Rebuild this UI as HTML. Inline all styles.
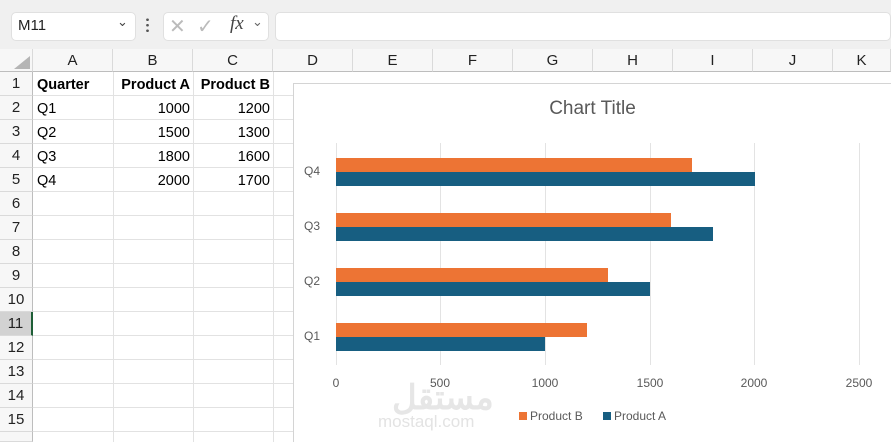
<!DOCTYPE html><html style="width:891px;height:442px;overflow:hidden"><head><style>
*{margin:0;padding:0;box-sizing:border-box}
body{width:891px;height:442px;overflow:hidden;background:#fff;font-family:"Liberation Sans",sans-serif;position:relative}
.a{position:absolute}
.tb{left:0;top:0;width:891px;height:49px;background:#f0f0f0}
.box{background:#fff;border:1px solid #e0e0e0;border-radius:5px}
.ch{top:49px;height:23px;background:#f7f7f7;border-right:1px solid #dadada;border-bottom:1px solid #bdbdbd;text-align:center;font-size:15px;line-height:23px;color:#222}
.rh{left:0;width:33px;height:24px;background:#f7f7f7;border-bottom:1px solid #dadada;border-right:1px solid #bdbdbd;text-align:center;font-size:15px;line-height:24px;color:#222}
.vl{top:72px;width:1px;height:370px;background:#e2e2e2}
.hl{left:33px;width:260px;height:1px;background:#e2e2e2}
.c{font-size:14.5px;line-height:24px;color:#000}
.gl{top:143px;width:1px;height:222px;background:#e3e3e3}
.xl{top:376px;font-size:12px;color:#595959;width:40px;margin-left:-20px;text-align:center}
.yl{left:304px;font-size:12px;color:#595959}
.o{background:#ed7434;height:14px;left:336px}
.b{background:#175e81;height:14px;left:336px}
</style></head><body>
<div class="a tb"></div>
<div class="a box" style="left:11px;top:12px;width:125px;height:29px"></div>
<div class="a" style="left:18px;top:17px;font-size:15px;color:#222">M11</div>
<div class="a" style="left:117px;top:14px;font-size:13px;color:#444">&#8964;</div>
<div class="a" style="left:146px;top:17px;width:3px;height:16px;background:radial-gradient(circle,#555 1.2px,transparent 1.5px) 0 0/3px 5.5px"></div>
<div class="a box" style="left:163px;top:12px;width:106px;height:29px"></div>
<div class="a" style="left:169px;top:14px;font-size:20px;color:#bbb">&#10005;</div>
<div class="a" style="left:197px;top:14px;font-size:20px;color:#bbb">&#10003;</div>
<div class="a" style="left:230px;top:13px;font-size:19px;font-style:italic;font-family:'Liberation Serif',serif;color:#444">fx</div>
<div class="a" style="left:252px;top:14px;font-size:13px;color:#666">&#8964;</div>
<div class="a box" style="left:275px;top:12px;width:616px;height:29px"></div>
<div class="a ch" style="left:0;width:33px"></div>
<div class="a" style="left:14px;top:56px;width:0;height:0;border-left:16px solid transparent;border-bottom:13px solid #b5b5b5"></div>
<div class="a ch" style="left:33px;width:80px">A</div>
<div class="a ch" style="left:113px;width:80px">B</div>
<div class="a ch" style="left:193px;width:80px">C</div>
<div class="a ch" style="left:273px;width:80px">D</div>
<div class="a ch" style="left:353px;width:80px">E</div>
<div class="a ch" style="left:433px;width:80px">F</div>
<div class="a ch" style="left:513px;width:80px">G</div>
<div class="a ch" style="left:593px;width:80px">H</div>
<div class="a ch" style="left:673px;width:80px">I</div>
<div class="a ch" style="left:753px;width:80px">J</div>
<div class="a ch" style="left:833px;width:58px">K</div>
<div class="a rh" style="top:72px">1</div><div class="a rh" style="top:96px">2</div><div class="a rh" style="top:120px">3</div><div class="a rh" style="top:144px">4</div><div class="a rh" style="top:168px">5</div><div class="a rh" style="top:192px">6</div><div class="a rh" style="top:216px">7</div><div class="a rh" style="top:240px">8</div><div class="a rh" style="top:264px">9</div><div class="a rh" style="top:288px">10</div>
<div class="a rh" style="top:312px;background:#d2d2d2;border-right:2px solid #1e5e36">11</div>
<div class="a rh" style="top:336px">12</div><div class="a rh" style="top:360px">13</div><div class="a rh" style="top:384px">14</div><div class="a rh" style="top:408px">15</div><div class="a rh" style="top:432px;height:10px"></div>
<div class="a vl" style="left:113px"></div><div class="a vl" style="left:193px"></div><div class="a vl" style="left:273px"></div>
<div class="a hl" style="top:95px"></div><div class="a hl" style="top:119px"></div><div class="a hl" style="top:143px"></div><div class="a hl" style="top:167px"></div><div class="a hl" style="top:191px"></div><div class="a hl" style="top:215px"></div><div class="a hl" style="top:239px"></div><div class="a hl" style="top:263px"></div><div class="a hl" style="top:287px"></div><div class="a hl" style="top:311px"></div><div class="a hl" style="top:335px"></div><div class="a hl" style="top:359px"></div><div class="a hl" style="top:383px"></div><div class="a hl" style="top:407px"></div><div class="a hl" style="top:431px"></div>
<div class="a c" style="left:37px;top:73px;font-weight:bold">Quarter</div>
<div class="a c" style="left:113px;width:77px;text-align:right;top:73px;font-weight:bold">Product A</div>
<div class="a c" style="left:193px;width:77px;text-align:right;top:73px;font-weight:bold">Product B</div>
<div class="a c" style="left:37px;top:97px">Q1</div><div class="a c" style="left:113px;width:77px;text-align:right;top:97px">1000</div><div class="a c" style="left:193px;width:77px;text-align:right;top:97px">1200</div>
<div class="a c" style="left:37px;top:121px">Q2</div><div class="a c" style="left:113px;width:77px;text-align:right;top:121px">1500</div><div class="a c" style="left:193px;width:77px;text-align:right;top:121px">1300</div>
<div class="a c" style="left:37px;top:145px">Q3</div><div class="a c" style="left:113px;width:77px;text-align:right;top:145px">1800</div><div class="a c" style="left:193px;width:77px;text-align:right;top:145px">1600</div>
<div class="a c" style="left:37px;top:169px">Q4</div><div class="a c" style="left:113px;width:77px;text-align:right;top:169px">2000</div><div class="a c" style="left:193px;width:77px;text-align:right;top:169px">1700</div>
<div class="a" style="left:293px;top:83px;width:598px;height:359px;background:#fff;border:1px solid #d4d4d4;border-right:none;border-bottom:none"></div>
<div class="a" style="left:294px;top:98px;width:597px;text-align:center;font-size:19px;color:#595959">Chart Title</div>
<div class="a gl" style="left:336px"></div><div class="a gl" style="left:440px"></div><div class="a gl" style="left:545px"></div><div class="a gl" style="left:650px"></div><div class="a gl" style="left:754px"></div><div class="a gl" style="left:859px"></div>
<div class="a o" style="top:158px;width:356px"></div><div class="a b" style="top:172px;width:419px"></div>
<div class="a o" style="top:213px;width:335px"></div><div class="a b" style="top:227px;width:377px"></div>
<div class="a o" style="top:268px;width:272px"></div><div class="a b" style="top:282px;width:314px"></div>
<div class="a o" style="top:323px;width:251px"></div><div class="a b" style="top:337px;width:209px"></div>
<div class="a yl" style="top:164px">Q4</div><div class="a yl" style="top:219px">Q3</div><div class="a yl" style="top:274px">Q2</div><div class="a yl" style="top:329px">Q1</div>
<div class="a xl" style="left:336px">0</div><div class="a xl" style="left:440px">500</div><div class="a xl" style="left:545px">1000</div><div class="a xl" style="left:650px">1500</div><div class="a xl" style="left:754px">2000</div><div class="a xl" style="left:859px">2500</div>
<div class="a" style="left:519px;top:412px;width:8px;height:8px;background:#ed7434"></div>
<div class="a" style="left:530px;top:409px;font-size:12px;color:#595959">Product B</div>
<div class="a" style="left:603px;top:412px;width:8px;height:8px;background:#175e81"></div>
<div class="a" style="left:614px;top:409px;font-size:12px;color:#595959">Product A</div>
<div class="a" style="left:392px;top:378px;font-size:34px;font-weight:bold;color:#e6e6e6;font-family:'Liberation Sans','Noto Sans CJK SC',sans-serif">مستقل</div>
<div class="a" style="left:378px;top:412px;font-size:17px;color:#e3e3e3">mostaql.com</div>
</body></html>
